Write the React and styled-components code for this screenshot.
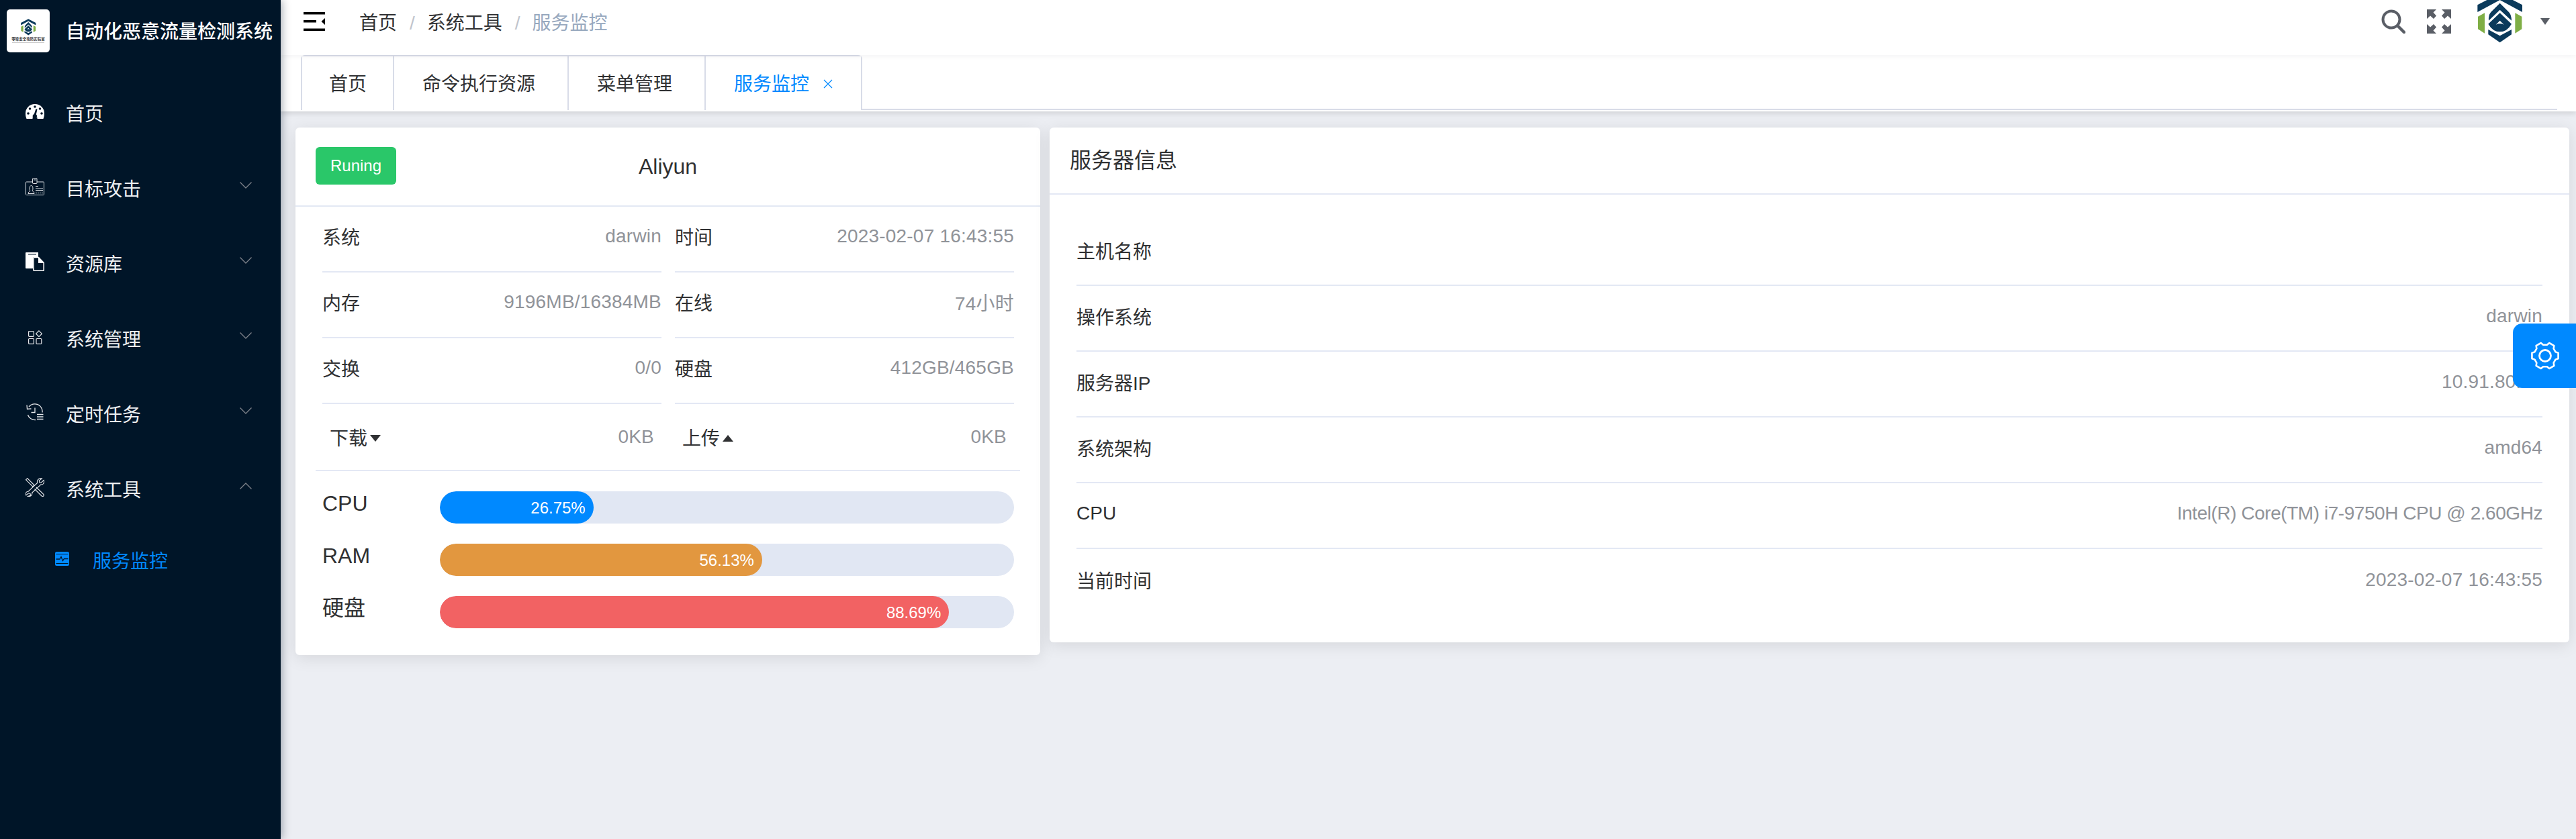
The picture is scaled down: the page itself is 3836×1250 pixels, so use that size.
import React from 'react'
import styled, {createGlobalStyle} from 'styled-components'

const FONT = '"Liberation Sans", "Noto Sans CJK SC", sans-serif'
const BLUE = '#0089ff'
const NAVY = '#001528'
const LINE = '#e3e8f4'

const GlobalStyle = createGlobalStyle`
  html, body {
    margin: 0;
    padding: 0;
    background: #eceef3;
  }
  * {
    box-sizing: border-box;
  }
`

const Page = styled.div`
  display: flex;
  width: 3836px;
  height: 1250px;
  overflow: hidden;
  font-family: ${FONT};
  font-size: 28px;
  color: #303133;
`

const Sidebar = styled.aside`
  flex: 0 0 418px;
  background: ${NAVY};
  box-shadow: 2px 0 12px rgba(0, 21, 41, 0.35);
  position: relative;
  z-index: 3;
`

const Brand = styled.div`
  display: flex;
  align-items: center;
  height: 92px;
  padding: 0 10px;
`

const LogoBox = styled.div`
  flex: 0 0 64px;
  height: 64px;
  display: flex;
  flex-direction: column;
  align-items: center;
  padding-top: 14px;
  background: #fff;
  border-radius: 5px;
`

const LogoCaption = styled.div`
  font-size: 5.5px;
  line-height: 7px;
  font-weight: 700;
  color: #333;
  white-space: nowrap;
  margin-top: 2px;
`

const LogoRule = styled.div`
  width: 48px;
  height: 1px;
  margin-top: 1px;
  background: #c9c9c9;
`

const BrandTitle = styled.div`
  margin-left: 24px;
  margin-top: -2px;
  font-size: 28px;
  font-weight: 500;
  color: #fff;
  white-space: nowrap;
`

const Menu = styled.nav`
  display: flex;
  flex-direction: column;
  padding-top: 20px;
`

const MenuItem = styled.div`
  display: flex;
  align-items: center;
  height: ${p => p.$sub ? 100 : 112}px;
  padding-left: ${p => p.$sub ? 82 : 38}px;
  color: ${p => p.$active ? BLUE : '#eef0f2'};
  white-space: nowrap;
`

const MenuIcon = styled.span`
  flex: 0 0 ${p => p.$sub ? 21 : 28}px;
  height: 28px;
  margin-right: ${p => p.$sub ? 35 : 32}px;
  margin-top: -4px;
  display: flex;
  align-items: center;
  justify-content: center;
`

const Chevron = styled.svg`
  margin-left: auto;
  margin-right: 43px;
  margin-top: -8px;
  width: 18px;
  height: 10px;
`

const Main = styled.div`
  flex: 1;
  min-width: 0;
  display: flex;
  flex-direction: column;
  background: #eceef3;
`

const Header = styled.header`
  display: flex;
  align-items: center;
  height: 82px;
  padding: 0 39px 18px 34px;
  background: #fff;
  box-shadow: 0 2px 8px rgba(0, 21, 41, 0.05);
  position: relative;
  z-index: 2;
`

const Crumbs = styled.div`
  display: flex;
  align-items: baseline;
  margin-left: 51px;
  color: #303133;
`

const CrumbSep = styled.span`
  margin: 0 18px 0 19px;
  color: #c0c4cc;

  &:last-of-type {
    margin-right: 21px;
  }
`

const CrumbCurrent = styled.span`
  color: #97a8be;
`

const Tools = styled.div`
  margin-left: auto;
  display: flex;
  align-items: center;
`

const LogoSlot = styled.div`
  margin: 0 19px 0 30px;
  align-self: flex-start;
  height: 76px;
`

const TabBar = styled.div`
  height: 84px;
  padding: 0 28px 2px 30px;
  background: #fff;
  box-shadow: 0 3px 8px rgba(0, 0, 0, 0.12);
  position: relative;
  z-index: 1;
`

const TabRow = styled.div`
  display: flex;
  height: 82px;
  border-bottom: 2px solid #d8dce8;
`

const TabList = styled.div`
  display: flex;
  border: 2px solid #d8dce8;
  border-bottom: 0;
  border-radius: 6px 6px 0 0;
`

const Tab = styled.div`
  display: flex;
  align-items: center;
  height: ${p => p.$active ? 82 : 80}px;
  padding: 0 ${p => p.$plain ? 39 : 48}px ${p => p.$active ? 4 : 2}px ${p => p.$plain ? 40 : 42}px;
  border-right: ${p => p.$active ? 0 : '2px solid #d8dce8'};
  background: #fff;
  color: ${p => p.$active ? BLUE : '#303133'};
  white-space: nowrap;
`

const CloseMark = styled.svg`
  width: 14px;
  height: 14px;
  margin-left: 21px;
  margin-right: -6px;
  margin-top: 4px;
`

const Content = styled.main`
  display: flex;
  align-items: flex-start;
  gap: 14px;
  padding: 24px 10px 0 22px;
`

const Card = styled.section`
  flex: ${p => p.$fixed ? '0 0 1109px' : '1'};
  min-width: 0;
  background: #fff;
  border-radius: 6px;
  box-shadow: 0 4px 24px rgba(0, 0, 0, 0.1);
`

const StatusHead = styled.div`
  display: grid;
  grid-template-columns: 1fr auto 1fr;
  align-items: center;
  height: 118px;
  padding: 0 30px;
  border-bottom: 2px solid ${LINE};
`

const RunBadge = styled.div`
  justify-self: start;
  width: 120px;
  height: 56px;
  line-height: 56px;
  text-align: center;
  margin-top: -2px;
  font-size: 24px;
  color: #fff;
  background: #2ac769;
  border-radius: 6px;
`

const ServerName = styled.div`
  font-size: 32px;
`

const InfoGrid = styled.div`
  display: grid;
  grid-template-columns: 505px 505px;
  column-gap: 20px;
  padding: 0 0 0 40px;
`

const InfoRow = styled.div`
  display: flex;
  justify-content: space-between;
  align-items: center;
  height: 98px;
  padding: ${p => p.$flat ? '0 11px' : '0 0 8px'};
  border-bottom: ${p => p.$flat ? 0 : `2px solid ${LINE}`};
`

const Value = styled.span`
  color: #909399;
  white-space: nowrap;
  letter-spacing: ${p => p.$tight ? -0.45 : 0.2}px;
`

const Caret = styled.span`
  display: inline-block;
  width: 0;
  height: 0;
  margin-left: 4px;
  vertical-align: 5px;
  border-left: 8px solid transparent;
  border-right: 8px solid transparent;
  border-top: ${p => p.$up ? 0 : '10px solid #303133'};
  border-bottom: ${p => p.$up ? '10px solid #303133' : 0};
`

const Divider = styled.div`
  height: 2px;
  margin: 0 30px;
  background: ${LINE};
`

const Bars = styled.div`
  display: flex;
  flex-direction: column;
  gap: 30px;
  padding: 30px 39px 40px 40px;
`

const BarRow = styled.div`
  display: flex;
  align-items: flex-start;
`

const BarLabel = styled.div`
  flex: 0 0 175px;
  font-size: 32px;
  line-height: 36px;
`

const Track = styled.div`
  flex: 1;
  height: 48px;
  background: #e1e7f3;
  border-radius: 24px;
  overflow: hidden;
`

const Fill = styled.div`
  height: 48px;
  padding-right: 12px;
  background: ${p => p.$color};
  border-radius: 24px;
  color: #fff;
  font-size: 24px;
  line-height: 50px;
  text-align: right;
`

const DetailHead = styled.div`
  display: flex;
  align-items: center;
  height: 100px;
  padding: 0 30px 6px;
  font-size: 32px;
  border-bottom: 2px solid ${LINE};
`

const DetailList = styled.div`
  padding: 38px 40px 41px;
`

const DetailRow = styled.div`
  display: flex;
  justify-content: space-between;
  align-items: center;
  height: 98px;
  padding-bottom: 6px;
  border-bottom: 2px solid ${LINE};

  &:last-child {
    border-bottom: 0;
  }
`

const SettingsTab = styled.div`
  position: absolute;
  top: 482px;
  right: 0;
  z-index: 4;
  width: 94px;
  height: 96px;
  padding-left: 2px;
  display: flex;
  align-items: center;
  justify-content: center;
  background: ${BLUE};
  border-radius: 14px 0 0 14px;
`

// gear outline with six wide teeth
function gearPath () {
  const pts = []
  for (let i = 0; i < 6; i++) {
    const a = i * 60
    const add = (deg, r) => {
      const t = (a + deg) * Math.PI / 180
      pts.push(`${(21 + r * Math.cos(t)).toFixed(2)} ${(21 + r * Math.sin(t)).toFixed(2)}`)
    }
    add(-20, 16.5)
    add(-12, 20)
    add(12, 20)
    add(20, 16.5)
  }
  return 'M' + pts.join('L') + 'Z'
}

function LogoMark ({width, height, viewBox}) {
  return <svg width={width} height={height} viewBox={viewBox} style={{overflow: 'visible'}}>
    <path fill="#0b3a5b" d="M28 40L128 -12L228 40V72L128 18L28 72Z"/>
    <path fill="#7fae45" d="M30 92L60 76V167L30 148ZM196 76L226 92V148L196 167Z"/>
    <path fill="#0b3a5b" d="M76 150L128 178L180 150V172L128 208L76 172Z"/>
    <path fill="#0b3a5b" d="M128 32L168 72Q180 86 180 110L128 62L78 110Q76 86 88 72Z"/>
    <path fill="#0b3a5b" fillRule="evenodd" d="M128 76L180 125Q160 160 128 160Q96 160 76 125ZM128 110L110 128Q128 120 146 128Z"/>
  </svg>
}

const GaugeIcon = () => <svg width="28" height="22" viewBox="0 0 28 22">
  <path fill="#fff" d="M14 0A14 14 0 0 1 28 14C28 17 27.5 19.5 26.5 22H1.5C.5 19.5 0 17 0 14A14 14 0 0 1 14 0Z"/>
  <g fill={NAVY}>
    <circle cx="14" cy="4" r="1.8"/>
    <circle cx="6.5" cy="7" r="1.8"/>
    <circle cx="21.5" cy="7" r="1.8"/>
    <circle cx="4" cy="14" r="1.8"/>
    <circle cx="24" cy="14" r="1.8"/>
    <path d="M15.5 7L17.5 8L15.8 15.5A3.2 3.2 0 1 1 12.8 15Z"/>
    <rect x="10.5" y="20" width="7" height="2"/>
  </g>
</svg>

const BadgeIcon = () => <svg width="28" height="26" viewBox="0 0 28 26" fill="none" stroke="#dfe3e6" strokeWidth="1">
  <path d="M10 6H1.5Q.5 6 .5 7V24.5Q.5 25.5 1.5 25.5H26.5Q27.5 25.5 27.5 24.5V7Q27.5 6 26.5 6H17"/>
  <rect x="10.5" y=".5" width="6.5" height="8" rx="1"/>
  <path d="M12 3H15.5"/>
  <path d="M4 23.5C3.5 20.5 7 20.5 7 19C5.5 18 5.5 11.5 8.5 11.5C11.5 11.5 11.5 18 10 19C10 20.5 13.5 20.5 13 23.5Z"/>
  <path d="M15 12.5H19M15 16H26M15 18.5H26"/>
  <path d="M15 22.5H26" strokeDasharray="2 1.2"/>
</svg>

const DocsIcon = () => <svg width="28" height="28" viewBox="0 0 28 28">
  <path fill="#fff" d="M1 0H19V7H11V24H1Q0 24 0 23V1Q0 0 1 0Z"/>
  <rect x="4" y="2.5" width="12" height="1" fill={NAVY}/>
  <path fill={NAVY} stroke="#fff" strokeWidth="1.6" d="M12 7.5H19.5L27.2 15.5V26.5Q27.2 27.2 26.5 27.2H12.7Q12 27.2 12 26.5Z"/>
  <path fill="#fff" d="M19 7L28 16H19Z"/>
</svg>

const ModulesIcon = () => <svg width="21" height="21" viewBox="0 0 21 21" fill="none" stroke="#e4e7ea" strokeWidth="1.2">
  <rect x=".6" y="1.5" width="7.8" height="7.8" rx="1"/>
  <rect x=".6" y="12.5" width="7.8" height="7.8" rx="1"/>
  <rect x="12" y="12.5" width="7.8" height="7.8" rx="1"/>
  <path d="M16 .8L20.4 5.2L16 9.6L11.6 5.2Z"/>
</svg>

const HistoryIcon = () => <svg width="26" height="26" viewBox="0 0 26 26" fill="none" stroke="#e4e7ea" strokeWidth="1.3">
  <path d="M4 5A11.3 11.3 0 0 1 24 13.5"/>
  <path d="M14 24.5A11.3 11.3 0 0 1 2.4 17"/>
  <path d="M1 2.5L1.5 8.5L7.5 8"/>
  <path d="M13 6.5V13.5H7.5"/>
  <path d="M16 16.5H25.5M16 20H25.5M16 23.5H25.5"/>
</svg>

const ToolsIcon = () => <svg width="28" height="28" viewBox="0 0 28 28" fill="none" stroke="#e4e7ea" strokeWidth="1.1">
  <path d="M2.8 .6L.6 2.8L10.8 13L13 10.8Z"/>
  <path d="M16 14L27 24.5Q27.8 26 26.7 27Q25.5 27.9 24 27L13.5 16.5"/>
  <path d="M27.2 3.5L23 7.2L20.7 6.5L20.3 4L24.5 .9C20.5 -.4 16.5 3 17.6 7.5L3.8 20.5C1 20 -.5 23 .8 25.8L4.5 22.8L7 23.5L7.5 26L3.5 27.4C7 28.5 10.5 25.8 9.8 22L23 9.8C26 10.8 28.5 7.5 27.2 3.5Z"/>
</svg>

const PulseIcon = () => <svg width="21" height="21" viewBox="0 0 21 21">
  <rect width="21" height="21" rx="2.5" fill={BLUE}/>
  <path d="M1.5 3.5H19.5M1.5 17.5H19.5" stroke={NAVY} strokeWidth="1"/>
  <path d="M1.5 11H7L9 7.5L11.5 13.5L13.5 10.5H19.5" fill="none" stroke={NAVY} strokeWidth="1.3"/>
</svg>

const NAV = [
  {name: '首页', icon: <GaugeIcon/>},
  {name: '目标攻击', icon: <BadgeIcon/>, arrow: 'down'},
  {name: '资源库', icon: <DocsIcon/>, arrow: 'down'},
  {name: '系统管理', icon: <ModulesIcon/>, arrow: 'down'},
  {name: '定时任务', icon: <HistoryIcon/>, arrow: 'down'},
  {name: '系统工具', icon: <ToolsIcon/>, arrow: 'up'}
]

const LEFT_INFO = [
  ['系统', 'darwin'], ['时间', '2023-02-07 16:43:55'],
  ['内存', '9196MB/16384MB'], ['在线', '74小时'],
  ['交换', '0/0'], ['硬盘', '412GB/465GB']
]

const BARS = [
  {name: 'CPU', value: 26.75, color: BLUE},
  {name: 'RAM', value: 56.13, color: '#e2973f'},
  {name: '硬盘', value: 88.69, color: '#f26263'}
]

const DETAILS = [
  ['主机名称', ''],
  ['操作系统', 'darwin'],
  ['服务器IP', '10.91.80.77'],
  ['系统架构', 'amd64'],
  ['CPU', 'Intel(R) Core(TM) i7-9750H CPU @ 2.60GHz'],
  ['当前时间', '2023-02-07 16:43:55']
]

export default function App () {
  return <Page>
    <GlobalStyle/>
    <Sidebar>
      <Brand>
        <LogoBox>
          <LogoMark width={28} height={25} viewBox="0 -14 252 226"/>
          <LogoCaption>零锋安全攻防实验室</LogoCaption>
          <LogoRule/>
        </LogoBox>
        <BrandTitle>自动化恶意流量检测系统</BrandTitle>
      </Brand>
      <Menu>
        {NAV.map(item => <MenuItem key={item.name}>
          <MenuIcon>{item.icon}</MenuIcon>
          {item.name}
          {item.arrow && <Chevron viewBox="0 0 18 10" fill="none" stroke="#7d828a" strokeWidth="1.3">
            <path d={item.arrow === 'up' ? 'M.5 9.5L9 1L17.5 9.5' : 'M.5 .5L9 9L17.5 .5'}/>
          </Chevron>}
        </MenuItem>)}
        <MenuItem $sub $active>
          <MenuIcon $sub><PulseIcon/></MenuIcon>
          服务监控
        </MenuItem>
      </Menu>
    </Sidebar>
    <Main>
      <Header>
        <svg width="32" height="28" viewBox="0 0 32 28">
          <path d="M0 0H32V3.5H0ZM0 12H19V15.5H0ZM0 24.5H32V28H0ZM32 9V19L26.5 14Z" fill="#000"/>
        </svg>
        <Crumbs>
          <span>首页</span>
          <CrumbSep>/</CrumbSep>
          <span>系统工具</span>
          <CrumbSep>/</CrumbSep>
          <CrumbCurrent>服务监控</CrumbCurrent>
        </Crumbs>
        <Tools>
          <svg width="36" height="36" viewBox="0 0 36 36" fill="none" stroke="#5a5e66">
            <circle cx="15" cy="15" r="12.5" strokeWidth="4"/>
            <path d="M24.5 24.5L34 34" strokeWidth="4.5" strokeLinecap="round"/>
          </svg>
          <svg width="36" height="36" viewBox="0 0 36 36" fill="#5a5e66" style={{marginLeft: 32}}>
            <path d="M0 0H14L9.5 4.5L14 9.5L10 14L5 9.5L0 14Z"/>
            <path d="M36 0H22L26.5 4.5L22 9.5L26 14L31 9.5L36 14Z"/>
            <path d="M0 36H14L9.5 31.5L14 26.5L10 22L5 26.5L0 22Z"/>
            <path d="M36 36H22L26.5 31.5L22 26.5L26 22L31 26.5L36 22Z"/>
          </svg>
          <LogoSlot>
            <LogoMark width={84} height={76} viewBox="0 0 252 228"/>
          </LogoSlot>
          <svg width="14" height="10" viewBox="0 0 14 10"><path d="M0 0H14L7 10Z" fill="#5a5e66"/></svg>
        </Tools>
      </Header>
      <TabBar>
        <TabRow>
          <TabList>
            <Tab $plain>首页</Tab>
            <Tab>命令执行资源</Tab>
            <Tab>菜单管理</Tab>
            <Tab $active>
              服务监控
              <CloseMark viewBox="0 0 14 14" fill="none" stroke={BLUE} strokeWidth="1.2">
                <path d="M1 1L13 13M13 1L1 13"/>
              </CloseMark>
            </Tab>
          </TabList>
        </TabRow>
      </TabBar>
      <Content>
        <Card $fixed>
          <StatusHead>
            <RunBadge>Runing</RunBadge>
            <ServerName>Aliyun</ServerName>
          </StatusHead>
          <InfoGrid>
            {LEFT_INFO.map(([label, value]) => <InfoRow key={label}>
              <span>{label}</span>
              <Value>{value}</Value>
            </InfoRow>)}
            <InfoRow $flat>
              <span>下载<Caret/></span>
              <Value>0KB</Value>
            </InfoRow>
            <InfoRow $flat>
              <span>上传<Caret $up/></span>
              <Value>0KB</Value>
            </InfoRow>
          </InfoGrid>
          <Divider/>
          <Bars>
            {BARS.map(bar => <BarRow key={bar.name}>
              <BarLabel>{bar.name}</BarLabel>
              <Track>
                <Fill $color={bar.color} style={{width: `${bar.value}%`}}>{bar.value}%</Fill>
              </Track>
            </BarRow>)}
          </Bars>
        </Card>
        <Card>
          <DetailHead>服务器信息</DetailHead>
          <DetailList>
            {DETAILS.map(([label, value]) => <DetailRow key={label}>
              <span>{label}</span>
              <Value $tight={label === 'CPU'}>{value}</Value>
            </DetailRow>)}
          </DetailList>
        </Card>
      </Content>
    </Main>
    <SettingsTab>
      <svg width="42" height="42" viewBox="0 0 42 42" fill="none" stroke="#fff">
        <path d={gearPath()} strokeWidth="2.6" strokeLinejoin="round"/>
        <circle cx="21" cy="21" r="8.5" strokeWidth="2.8"/>
      </svg>
    </SettingsTab>
  </Page>
}
